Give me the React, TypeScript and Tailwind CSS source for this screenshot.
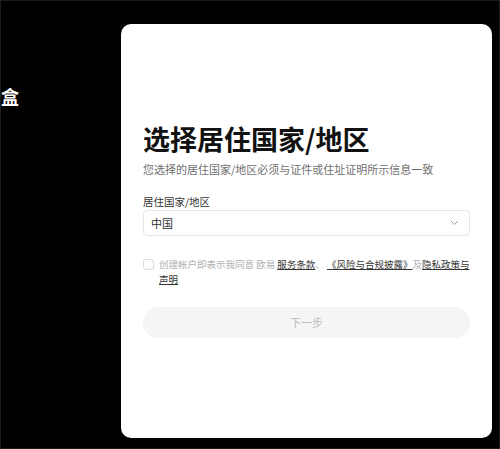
import React from "react";

const cjk = { fontFamily: '"Noto Sans CJK SC", "Noto Sans", sans-serif' };

export default function App() {
  return (
    <div className="flex h-[449px] w-[500px] overflow-hidden border border-[#1c1c1c] bg-black" style={cjk}>
      {/* left brand fragment */}
      <div className="w-[120px] shrink-0 pt-[81px]">
        <div className="text-[18px] font-bold leading-[28px] text-white">盒</div>
      </div>

      {/* card */}
      <div className="mt-[23px] flex h-[414px] w-[371px] shrink-0 flex-col rounded-[10px] bg-white pl-[22px] pr-[22px] pt-[99px]">
        <h1 className="text-[27px] font-bold leading-[32px] text-[#111]">选择居住国家/地区</h1>
        <p className="mt-[6px] text-[11px] leading-[16px] text-[#707070]">
          您选择的居住国家/地区必须与证件或住址证明所示信息一致
        </p>

        <label className="mt-[17px] text-[10.5px] leading-[16px] text-[#333]">居住国家/地区</label>
        <div className="flex h-[26px] items-center justify-between rounded-[4px] border border-[#e6e6e6] pl-[7px] pr-[10px]">
          <span className="text-[11px] text-[#333]">中国</span>
          <svg width="9" height="6" viewBox="0 0 9 6" fill="none">
            <path d="M1 1l3.5 3.5L8 1" stroke="#9a9a9a" strokeWidth="1" />
          </svg>
        </div>

        <div className="mt-[21px] flex gap-[5px]">
          <div className="mt-[2px] h-[11px] w-[11px] shrink-0 rounded-[3px] border border-[#d9d9d9]" />
          <p className="w-[312px] text-[9.5px] leading-[15px] text-[#b0b0b0]">
            创建帐户即表示我同意 欧易{" "}
            <span className="text-[#333] underline">服务条款</span>、{" "}
            <span className="text-[#333] underline">《风险与合规披露》</span>及
            <span className="text-[#333] underline">隐私政策与声明</span>
          </p>
        </div>

        <button className="mt-[20px] h-[31px] w-full rounded-full bg-[#f5f5f5] text-[11px] text-[#bdbdbd]">
          下一步
        </button>
      </div>
    </div>
  );
}
